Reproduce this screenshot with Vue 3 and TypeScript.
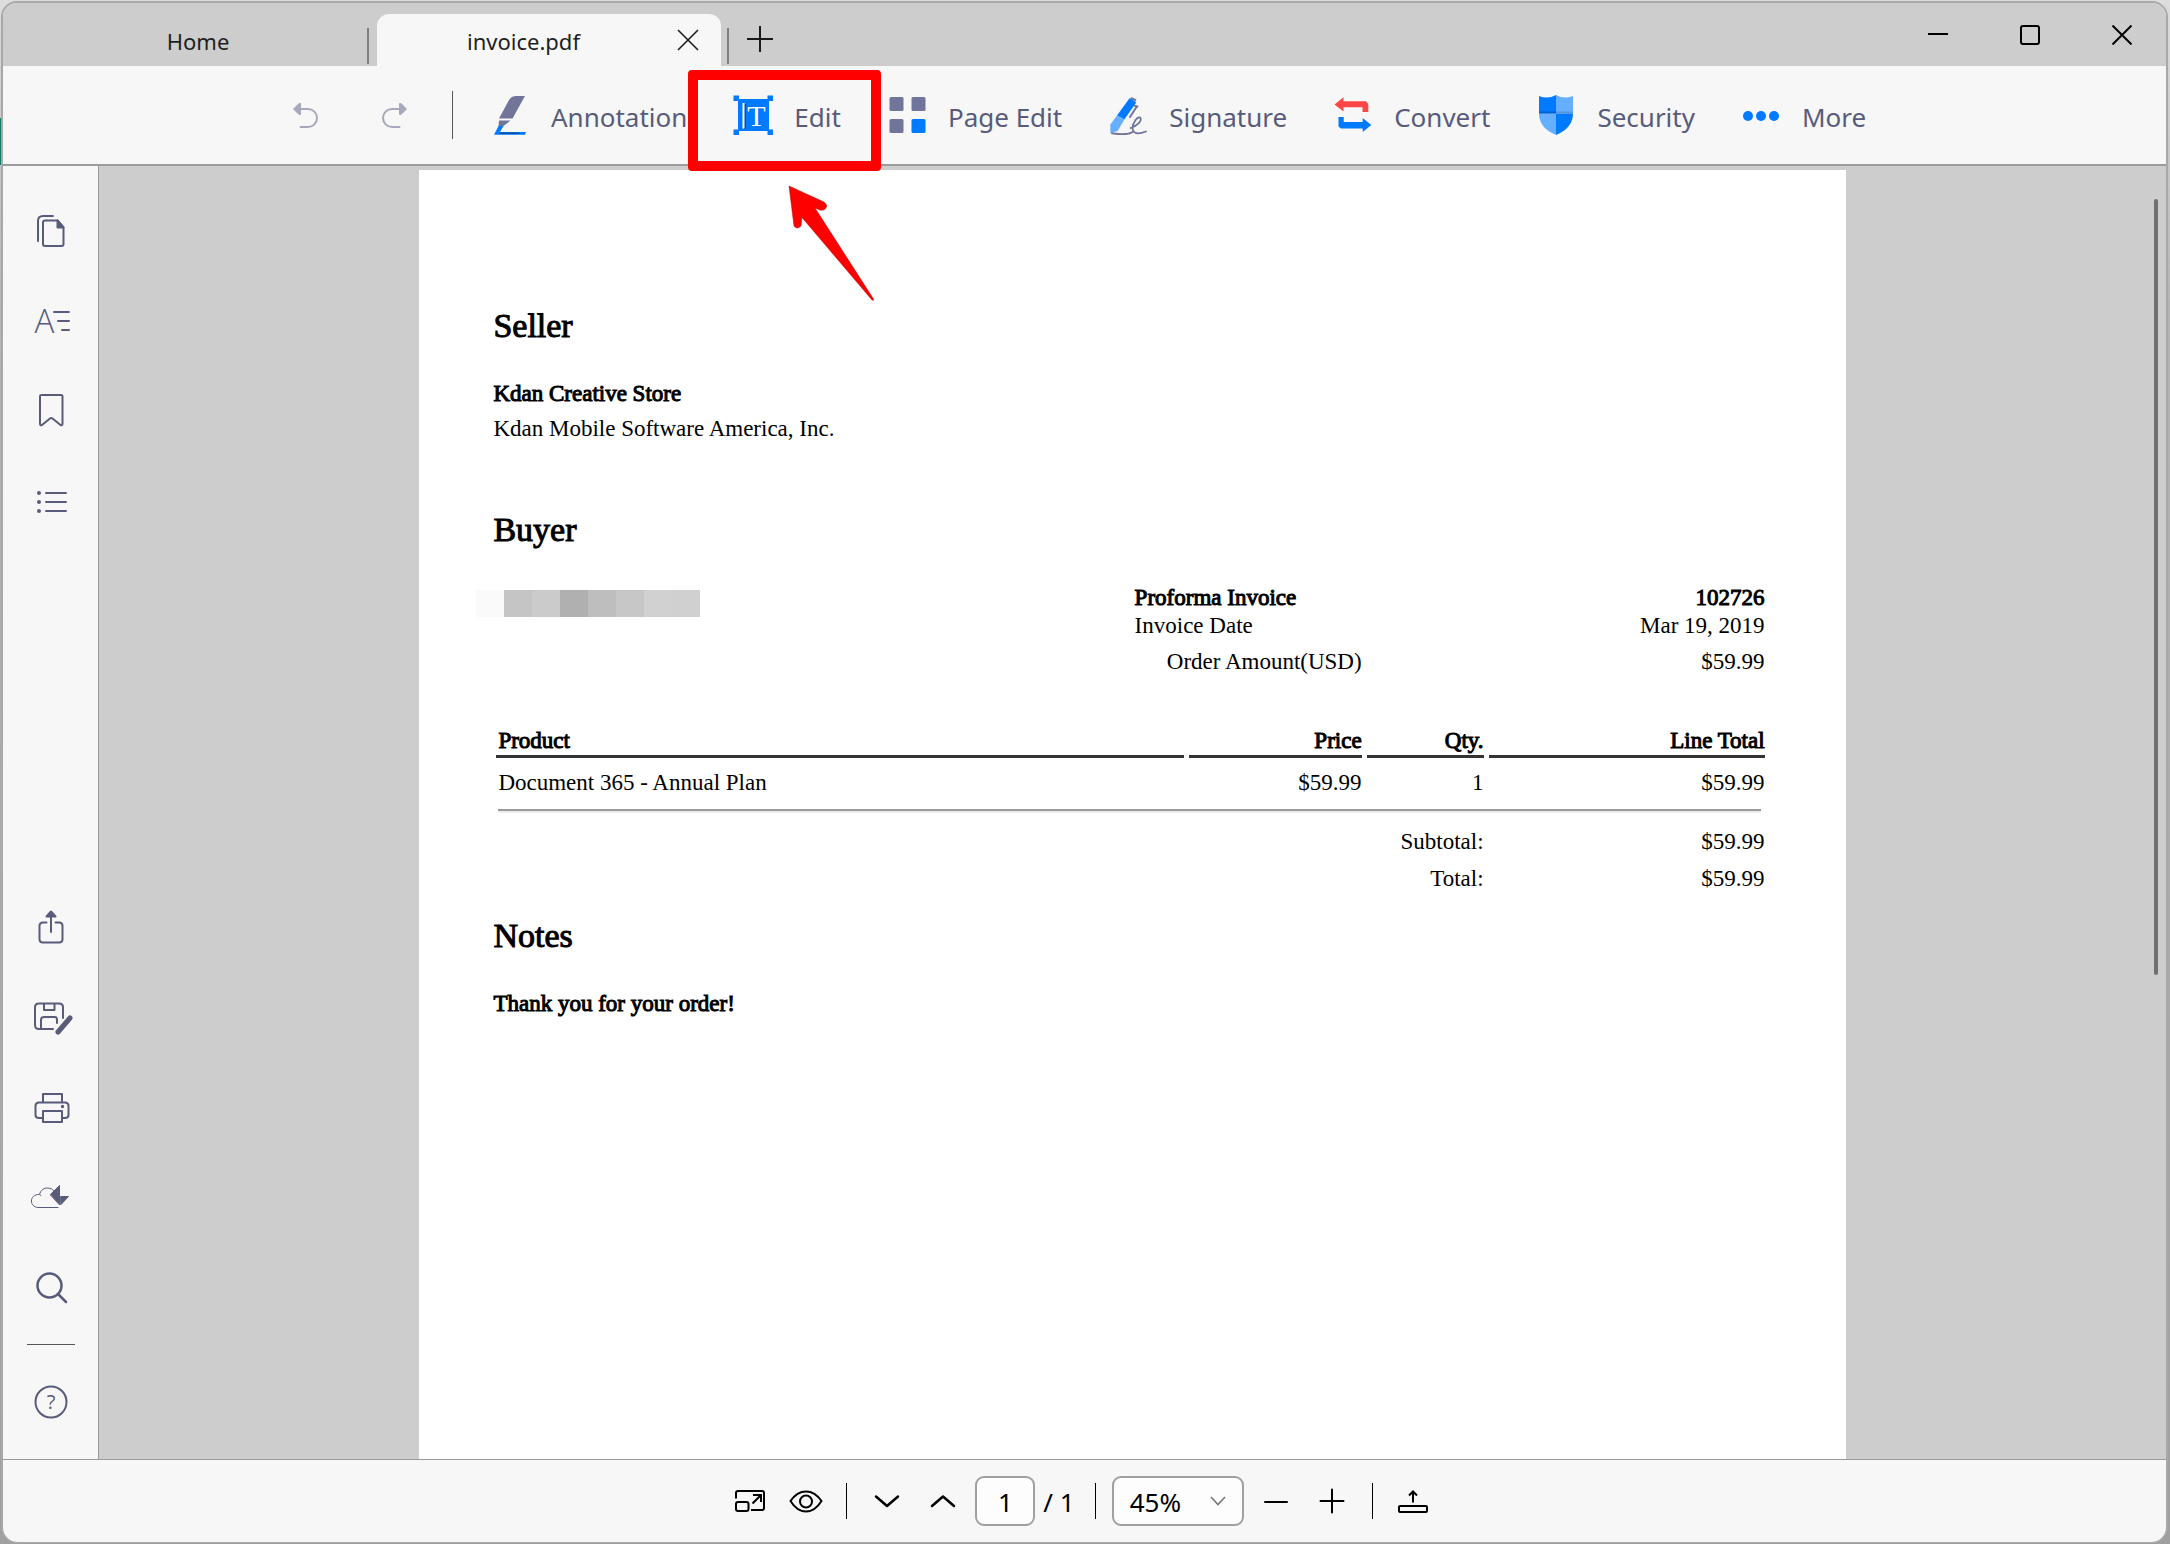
<script setup lang="ts">
import { ref } from 'vue'

interface LineItem {
  product: string
  price: string
  qty: number
  total: string
}

const items: LineItem[] = [
  { product: 'Document 365 - Annual Plan', price: '$59.99', qty: 1, total: '$59.99' },
]

const redaction: string[] = ['#fafafa', '#c5c5c5', '#cbcbcb', '#b0b0b0', '#bebebe', '#c7c7c7', '#d1d1d1', '#d0d0d0']

const currentPage = ref<string>('1')
const zoom = ref<string>('45%')
</script>

<template>
  <div class="desktop">
    <div class="window">
      <header class="titlebar">
        <div class="tab home"><a href="#home">Home</a></div>
        <span class="tab-sep"></span>
        <div class="tab active">
          <a href="#invoice">invoice.pdf</a>
          <button class="tab-close" aria-label="Close tab">
            <svg viewBox="0 0 22 22" width="22" height="22"><path d="M1 1 L21 21 M21 1 L1 21" stroke="#1b1b1b" stroke-width="1.6" /></svg>
          </button>
        </div>
        <span class="tab-sep"></span>
        <button class="tab-new" aria-label="New tab">
          <svg viewBox="0 0 26 26" width="26" height="26"><path d="M13 0 V26 M0 13 H26" stroke="#1b1b1b" stroke-width="2" /></svg>
        </button>
        <div class="window-controls">
          <button aria-label="Minimize">
            <svg viewBox="0 0 20 20" width="20" height="20"><path d="M0 9 H20" stroke="#000" stroke-width="2" /></svg>
          </button>
          <button aria-label="Maximize">
            <svg viewBox="0 0 20 20" width="20" height="20"><rect x="1" y="1" width="18" height="18" rx="2" fill="none" stroke="#000" stroke-width="2" /></svg>
          </button>
          <button aria-label="Close">
            <svg viewBox="0 0 20 20" width="20" height="20"><path d="M0.5 0.5 L19.5 19.5 M19.5 0.5 L0.5 19.5" stroke="#000" stroke-width="2" /></svg>
          </button>
        </div>
      </header>

      <nav class="toolbar">
        <div class="history">
          <button aria-label="Undo">
            <svg class="icon" viewBox="0 0 40 40"><path d="M14 14 H23 A9 9 0 0 1 23 32 H15.500" fill="none" stroke="#a7a9ba" stroke-width="2" stroke-linecap="round" /><path d="M8.500 14 L14 8.500 H15.500 V19.500 H14 Z" fill="#a7a9ba" stroke="#a7a9ba" stroke-linejoin="round" /></svg>
          </button>
          <button aria-label="Redo">
            <svg class="icon" viewBox="0 0 40 40"><path d="M26 14 H17 A9 9 0 0 0 17 32 H24.500" fill="none" stroke="#a7a9ba" stroke-width="2" stroke-linecap="round" /><path d="M31.500 14 L26 8.500 H24.500 V19.500 H26 Z" fill="#a7a9ba" stroke="#a7a9ba" stroke-linejoin="round" /></svg>
          </button>
        </div>
        <span class="toolbar-sep"></span>
        <div class="tools">
          <button class="tool">
            <svg class="icon" viewBox="0 0 40 40">
              <path d="M9 23.500 L19 5 Q21.500 1 26 1 H35 L22.500 23.500 Z M9 25.500 H20.500 L13.500 31 H8.500 Z" fill="#71759a" />
              <path d="M8.500 31 H13.500 L10 37 H36 L35 39.800 H4 Z" fill="#007aff" />
              <path d="M10 37.500 H30 L29 39 H9 Z" fill="#0052ab" />
            </svg>
            <span>Annotation</span>
          </button>
          <div class="callout">
            <button class="tool">
              <svg class="icon" viewBox="0 0 40 40">
                <path d="M5 4 H36 V36 H5 Z M0.500 0.500 H6 V6 H0.500 Z M34.500 0.500 H40 V6 H34.500 Z M0.500 34.500 H6 V40 H0.500 Z M34.500 34.500 H40 V40 H34.500 Z" fill="#007aff" />
                <path d="M12 9 V34" stroke="#0a3f80" stroke-width="1.500" />
                <path d="M10.500 8 V33.500" stroke="#fff" stroke-width="2" />
                <text x="23.500" y="30.500" text-anchor="middle" class="glyph-serif">T</text>
              </svg>
              <span>Edit</span>
            </button>
            <span class="highlight"></span>
            <svg class="arrow" viewBox="0 0 96 126">
              <path d="M6 6 L41 22 Q45 25 43 28 Q41 31 37 30 L32 28 L90.500 119 Q91 121 89 120 L19 37.500 L18 46 Q14 50 11 46 Z" fill="#fe0000" stroke="#c00000" stroke-width="0.500" />
            </svg>
          </div>
          <button class="tool">
            <svg class="icon" viewBox="0 0 40 40">
              <rect x="2.500" y="2" width="14" height="14" rx="1.500" fill="#71759a" />
              <rect x="24.500" y="2" width="14" height="14" rx="1.500" fill="#71759a" />
              <rect x="2.500" y="24" width="14" height="14" rx="1.500" fill="#71759a" />
              <rect x="24.500" y="24" width="14" height="14" rx="1.500" fill="#007aff" />
            </svg>
            <span>Page Edit</span>
          </button>
          <button class="tool">
            <svg class="icon" viewBox="0 0 40 40">
              <path d="M23.500 2 L28.500 4.500 L27.500 6.500 L22.500 4 Z" fill="#71759a" />
              <path d="M21.700 3 L28.300 7.500 L16.300 24.500 L9 20.500 Z" fill="#007aff" />
              <path d="M9 20.500 L16.300 24.500 L9.700 36 L2.300 38 V29.500 Z" fill="#66afff" />
              <path d="M28.500 12 L22 22 M29.500 11.500 L27 11" fill="none" stroke="#71759a" stroke-width="2" stroke-linecap="round" />
              <path d="M4 38.300 Q20 40.500 24.500 37" fill="none" stroke="#71759a" stroke-width="2" stroke-linecap="round" />
              <path d="M22.500 33 C29 31 34 26 32.500 23 C30 20 24.500 28 24.500 33 C25 39 30 39.500 38 36.500" fill="none" stroke="#71759a" stroke-width="1.800" stroke-linecap="round" />
            </svg>
            <span>Signature</span>
          </button>
          <button class="tool">
            <svg class="icon" viewBox="0 0 40 40">
              <path d="M1.500 9.500 L10.500 2.300 V6.300 H33 L35.300 9 V17 H29.500 V12.300 H10.500 V16.500 Z" fill="#ff4545" />
              <path d="M5.500 22 H10.700 V27 H29.700 V23 L38.300 30 L29.700 37 V33.500 H8 L5.500 31.500 Z" fill="#007aff" />
            </svg>
            <span>Convert</span>
          </button>
          <button class="tool">
            <svg class="icon" viewBox="0 0 40 40">
              <path d="M3 1 Q12 4.500 20 0 V18.500 H3 Z" fill="#007aff" />
              <path d="M37 1 Q28 4.500 20 0 V18.500 H37 Z" fill="#66afff" />
              <path d="M3 18.500 H20 V40 Q3 33 3 18.500 Z" fill="#66afff" />
              <path d="M37 18.500 H20 V40 Q37 33 37 18.500 Z" fill="#007aff" />
              <path d="M3 17.500 H20" stroke="#0064d0" stroke-width="2" />
              <path d="M20 17.500 H37" stroke="#5596dc" stroke-width="2" />
            </svg>
            <span>Security</span>
          </button>
          <button class="tool">
            <svg class="icon" viewBox="0 0 40 40"><g fill="#007aff"><circle cx="7" cy="21" r="5" /><circle cx="20" cy="21" r="5" /><circle cx="33" cy="21" r="5" /></g></svg>
            <span>More</span>
          </button>
        </div>
      </nav>

      <div class="body">
        <aside class="sidebar">
          <button aria-label="Pages">
            <svg class="icon line" viewBox="0 0 40 40"><path d="M7 30 V10 Q7 5 12 5 H22" /><path d="M14 9.500 H26.500 L32.500 16.500 V33 Q32.500 35 30.500 35 H14 Q12 35 12 33 V11.500 Q12 9.500 14 9.500 Z" /><path d="M26.500 9.500 V16.500 H32.500 Z" class="solid" /></svg>
          </button>
          <button aria-label="Text">
            <svg class="icon line" viewBox="0 0 40 40"><path d="M23 11 H38 M27 20 H38 M31 29 H38" /><text x="13.500" y="32" text-anchor="middle" class="glyph-letter">A</text></svg>
          </button>
          <button aria-label="Bookmarks">
            <svg class="icon line" viewBox="0 0 40 40"><path d="M9 5 Q9 4 10.500 4 H30 Q31.500 4 31.500 5 V33 Q31 35 29.500 34 L21.500 27.500 Q20.250 26.500 19 27.500 L11 34 Q9.500 35 9 33 Z" /></svg>
          </button>
          <button aria-label="Outline">
            <svg class="icon line" viewBox="0 0 40 40"><path d="M15 12 H35 M15 21 H35 M15 30 H35" /><g class="solid"><circle cx="8" cy="12" r="1" /><circle cx="8" cy="21" r="1" /><circle cx="8" cy="30" r="1" /></g></svg>
          </button>
          <span class="spacer"></span>
          <button aria-label="Share">
            <svg class="icon line" viewBox="0 0 40 40"><path d="M15.500 14.500 H12 Q8.500 14.500 8.500 18 V31 Q8.500 34.500 12 34.500 H28 Q31.500 34.500 31.500 31 V18 Q31.500 14.500 28 14.500 H24.500 M20 24 V5" /><path d="M15.500 8.500 L20 3.500 L24.500 8.500 Z" class="solid" /></svg>
          </button>
          <button aria-label="Save">
            <svg class="icon line" viewBox="0 0 40 40"><path d="M22 31 H8 Q4 31 4 27 V9 Q4 5.500 8 5.500 H28 Q32 5.500 32 9 V20 M13 6 V12 H23.500 V6 M10 31 V22 Q10 19 13 19 H24 Q26 19 26 22 V25" /><path d="M27 34 L39 20" stroke-width="5" /></svg>
          </button>
          <button aria-label="Print">
            <svg class="icon line" viewBox="0 0 40 40"><path d="M12 14 V6 H31 V14 M11 30 H8 Q4.500 30 4.500 27 V18 Q4.500 14.500 8 14.500 H34 Q37.500 14.500 37.500 18 V27 Q37.500 30 34 30 H31.500 M12 23 H31 V34 H12 Z" /><circle cx="31.500" cy="18.500" r="0.700" class="solid" /></svg>
          </button>
          <button aria-label="Cloud">
            <svg class="icon line thin" viewBox="0 0 40 40"><path d="M27 29.500 H7 C-2 29 -2 16 8.500 16.500 L10 17.500 M8.500 16 Q11 9.500 17 10 Q21 10 23 13" /><path d="M19.500 16.500 L28.500 7.500 V26.500 Z M30 18.500 H37.500 L30 26.500 Z" class="solid" /></svg>
          </button>
          <button aria-label="Search">
            <svg class="icon line bold" viewBox="0 0 40 40"><circle cx="18.500" cy="17.500" r="12" /><path d="M27 26 L35 34" /></svg>
          </button>
          <hr class="side-rule" />
          <button class="help" aria-label="Help">
            <svg class="icon line" viewBox="0 0 40 40"><circle cx="20" cy="20" r="15.500" /><text x="20" y="27" text-anchor="middle" class="glyph-help">?</text></svg>
          </button>
        </aside>

        <main class="viewer">
          <article class="page">
            <h2>Seller</h2>
            <p class="party first"><strong>Kdan Creative Store</strong></p>
            <p class="party">Kdan Mobile Software America, Inc.</p>

            <h2 class="buyer">Buyer</h2>
            <div class="buyer-row">
              <div class="redacted">
                <span v-for="(c, i) in redaction" :key="i" :style="{ background: c }"></span>
              </div>
              <dl class="meta">
                <dt><strong>Proforma Invoice</strong></dt>
                <dd><strong>102726</strong></dd>
                <dt>Invoice Date</dt>
                <dd>Mar 19, 2019</dd>
                <dt class="amount">Order Amount(USD)</dt>
                <dd class="amount">$59.99</dd>
              </dl>
            </div>

            <table class="items">
              <colgroup>
                <col />
                <col class="c-price" />
                <col class="c-qty" />
                <col class="c-total" />
              </colgroup>
              <thead>
                <tr>
                  <th scope="col">Product</th>
                  <th scope="col">Price</th>
                  <th scope="col">Qty.</th>
                  <th scope="col">Line Total</th>
                </tr>
              </thead>
              <tbody>
                <tr v-for="item in items" :key="item.product">
                  <td>{{ item.product }}</td>
                  <td>{{ item.price }}</td>
                  <td>{{ item.qty }}</td>
                  <td>{{ item.total }}</td>
                </tr>
              </tbody>
              <tfoot>
                <tr>
                  <td colspan="4" class="rule"><hr /></td>
                </tr>
                <tr>
                  <td colspan="3">Subtotal:</td>
                  <td>$59.99</td>
                </tr>
                <tr>
                  <td colspan="3">Total:</td>
                  <td>$59.99</td>
                </tr>
              </tfoot>
            </table>

            <h2 class="notes">Notes</h2>
            <p class="party first"><strong>Thank you for your order!</strong></p>
          </article>
          <span class="scrollbar"></span>
        </main>
      </div>

      <footer class="statusbar">
        <button aria-label="Fit page">
          <svg class="icon" viewBox="0 0 40 40"><g fill="none" stroke="#000" stroke-width="2"><path d="M6 17.500 V12 Q6 10 8 10 H32 Q34 10 34 12 V27 Q34 29 32 29 H21" /><rect x="6" y="21" width="12.500" height="9" rx="2" /><path d="M22.500 22.500 L30.500 14.500 M23 14 H31 V21" /></g></svg>
        </button>
        <button aria-label="View mode">
          <svg class="icon" viewBox="0 0 40 40"><g fill="none" stroke="#000" stroke-width="2"><path d="M4.500 20 Q11 10.500 20 10.500 Q29 10.500 35.500 20 Q29 30.500 20 30.500 Q11 30.500 4.500 20 Z" /><circle cx="20" cy="20.500" r="6" /></g></svg>
        </button>
        <span class="status-sep"></span>
        <button aria-label="Next page">
          <svg class="icon" viewBox="0 0 40 40"><path d="M9 15.500 L20 25 L31 15.500" fill="none" stroke="#000" stroke-width="2.500" stroke-linecap="round" stroke-linejoin="round" /></svg>
        </button>
        <button aria-label="Previous page">
          <svg class="icon" viewBox="0 0 40 40"><path d="M9 25 L20 15.500 L31 25" fill="none" stroke="#000" stroke-width="2.500" stroke-linecap="round" stroke-linejoin="round" /></svg>
        </button>
        <input v-model="currentPage" class="page-input" type="text" aria-label="Page number" />
        <span class="page-count">/ 1</span>
        <span class="status-sep"></span>
        <div class="zoom">
          <select v-model="zoom" aria-label="Zoom level">
            <option>45%</option>
            <option>100%</option>
          </select>
          <svg viewBox="0 0 16 10" width="16" height="10"><path d="M1 1 L8 8.500 L15 1" fill="none" stroke="#777" stroke-width="1.600" /></svg>
        </div>
        <button aria-label="Zoom out">
          <svg class="icon" viewBox="0 0 40 40"><path d="M9 21 H31" stroke="#000" stroke-width="2" stroke-linecap="round" /></svg>
        </button>
        <button aria-label="Zoom in">
          <svg class="icon" viewBox="0 0 40 40"><path d="M8.500 20 H31.500 M20 8.500 V31.500" stroke="#000" stroke-width="2" stroke-linecap="round" /></svg>
        </button>
        <span class="status-sep"></span>
        <button aria-label="Export">
          <svg class="icon" viewBox="0 0 40 40"><g fill="none" stroke="#000" stroke-width="2"><rect x="6" y="25" width="28" height="6" rx="1" /><path d="M20 21.500 V11.500 M16 14.500 L20 10.500 L24 14.500" /></g></svg>
        </button>
      </footer>
    </div>
  </div>
</template>

<style>
body {
  margin: 0;
}
</style>

<style scoped>
.desktop {
  box-sizing: border-box;
  height: 100vh;
  padding: 1px 2px 1px 1px;
  background:
    linear-gradient(#187a6a, #187a6a) 0 118px / 3px 47px no-repeat,
    linear-gradient(#dcdddc, #b4b4b4 20%, #a0a0a0);
  font-family: 'Noto Sans', sans-serif;
}
.window {
  box-sizing: border-box;
  height: 100%;
  display: flex;
  flex-direction: column;
  overflow: hidden;
  border: 2px solid #a8a8a8;
  border-bottom-width: 1px;
  border-radius: 16px;
  background: #f7f7f7;
}
button {
  display: flex;
  align-items: center;
  justify-content: center;
  padding: 0;
  border: 0;
  background: none;
  color: inherit;
  font: inherit;
}
.icon {
  display: block;
  width: 40px;
  height: 40px;
  flex: none;
}

/* Title bar */
.titlebar {
  flex: none;
  display: flex;
  align-items: flex-end;
  height: 63px;
  background: #cdcdcd;
  color: #1f1f1f;
  font-size: 22px;
  line-height: 30px;
}
.tab {
  box-sizing: border-box;
  display: flex;
  align-items: center;
  height: 52px;
}
.tab a {
  flex: 1;
  padding-top: 2px;
  color: inherit;
  text-align: center;
  text-decoration: none;
}
.tab.home {
  width: 364px;
  padding-left: 26px;
}
.tab.active {
  width: 344px;
  margin-left: 8px;
  margin-right: 6px;
  padding-right: 15px;
  border-radius: 12px 12px 0 0;
  background: #f7f7f7;
}
.tab-close {
  width: 36px;
  height: 36px;
}
.tab-sep {
  width: 2px;
  height: 36px;
  margin-bottom: 2px;
  background: #808080;
}
.tab-new {
  width: 62px;
  height: 54px;
}
.window-controls {
  display: flex;
  align-self: center;
  gap: 4px;
  margin-left: auto;
}
.window-controls button {
  width: 88px;
  height: 40px;
}

/* Toolbar */
.toolbar {
  flex: none;
  position: relative;
  z-index: 1;
  display: flex;
  align-items: center;
  height: 98px;
  padding-left: 282px;
  border-bottom: 2px solid #9b9d9d;
  color: #585c7a;
  font-size: 26px;
  line-height: 36px;
}
.history {
  display: flex;
  gap: 50px;
}
.toolbar-sep {
  width: 1px;
  height: 48px;
  margin: 0 37px;
  background: #555;
}
.tools {
  display: flex;
  gap: 46px;
}
.tool {
  gap: 21px;
  height: 98px;
}
.tool span {
  padding-top: 3px;
  white-space: nowrap;
}
.callout {
  position: relative;
}
.highlight {
  position: absolute;
  top: 4px;
  bottom: -7px;
  left: -45px;
  right: -40px;
  border: 10px solid #fe0000;
  border-radius: 4px;
}
.arrow {
  position: absolute;
  top: 114px;
  left: 50px;
  width: 96px;
  height: 126px;
}
.glyph-serif {
  fill: #fff;
  font-family: 'Liberation Serif', serif;
  font-size: 30px;
}

/* Body */
.body {
  flex: 1;
  min-height: 0;
  display: flex;
}
.sidebar {
  flex: none;
  box-sizing: border-box;
  width: 96px;
  display: flex;
  flex-direction: column;
  align-items: center;
  padding: 20px 0 12px;
  border-right: 1px solid #999;
}
.sidebar button {
  flex: none;
  width: 90px;
  height: 90px;
}
.spacer {
  flex: 1;
}
.side-rule {
  width: 48px;
  height: 1px;
  margin: 11px 0 12px;
  border: 0;
  background: #555;
}
.line {
  overflow: visible;
  fill: none;
  stroke: #585c7a;
  stroke-width: 2;
  stroke-linecap: round;
  stroke-linejoin: round;
}
.line.thin {
  stroke-width: 1;
}
.line.bold {
  stroke-width: 2.5;
}
.line .solid {
  fill: #585c7a;
}
.glyph-letter,
.glyph-help {
  fill: #585c7a;
  stroke: none;
  font-family: 'Open Sans', 'Noto Sans', sans-serif;
}
.glyph-letter {
  font-size: 33px;
  font-weight: 300;
}
.glyph-help {
  font-size: 20px;
}
.viewer {
  flex: 1;
  position: relative;
  overflow: hidden;
  padding-top: 4px;
  background: #cdcdcd;
}
.scrollbar {
  position: absolute;
  top: 33px;
  right: 8px;
  width: 4px;
  height: 60%;
  border-radius: 2px;
  background: #707070;
}

/* Invoice page */
.page {
  box-sizing: border-box;
  width: 69%;
  min-height: 100%;
  margin: 0 auto;
  padding: 136px 81px 0 74px;
  background: #fff;
  color: #000;
  font-family: 'Liberation Serif', serif;
  font-size: 23px;
  line-height: 26px;
}
h2,
p,
dl,
dd {
  margin: 0;
}
h2 {
  font-size: 34px;
  font-weight: 400;
  line-height: 40px;
}
h2,
strong,
th {
  font-weight: 400;
  -webkit-text-stroke: 1px #000;
}
.party {
  line-height: 35px;
}
.party.first {
  margin-top: 30px;
}
.buyer {
  margin-top: 64px;
}
.buyer-row {
  display: flex;
  justify-content: space-between;
  margin-top: 25px;
}
.redacted {
  display: flex;
  margin: 15px 0 0 -17px;
}
.redacted span {
  width: 28px;
  height: 27px;
}
.meta {
  display: grid;
  grid-template-columns: 227px 1fr;
  width: 630px;
  padding-top: 9px;
  line-height: 28px;
}
.meta dd {
  text-align: right;
}
.meta .amount {
  margin-top: 8px;
  text-align: right;
}
.items {
  width: calc(100% + 7px);
  margin: 52px -5px 0 -2px;
  border-collapse: separate;
  border-spacing: 5px 0;
  table-layout: fixed;
}
.c-price {
  width: 173px;
}
.c-qty {
  width: 117px;
}
.c-total {
  width: 276px;
}
.items th,
.items td {
  padding: 0;
  text-align: right;
}
.items th {
  padding-bottom: 1px;
  border-bottom: 3px solid #333;
}
.items th:first-child,
.items tbody td:first-child {
  padding-left: 2px;
  text-align: left;
}
.items tbody td {
  padding-top: 12px;
  padding-bottom: 13px;
}
.items tfoot td {
  padding-top: 11px;
}
.items tfoot td.rule {
  padding: 0 4px 5px 2px;
}
.rule hr {
  margin: 0;
  border: 0;
  border-top: 2px solid #999;
  border-bottom: 2px solid #ececec;
}
.notes {
  margin-top: 24px;
}

/* Status bar */
.statusbar {
  flex: none;
  box-sizing: border-box;
  display: flex;
  align-items: center;
  justify-content: center;
  height: 83px;
  padding-right: 6px;
  border-top: 1px solid #999;
  color: #000;
  font-size: 26px;
  line-height: 36px;
}
.statusbar button {
  width: 56px;
  height: 56px;
}
.status-sep {
  width: 1px;
  height: 36px;
  margin: 0 12px;
  background: #000;
}
.page-input,
.zoom select {
  box-sizing: border-box;
  height: 50px;
  border: 2px solid #a0a0a0;
  border-radius: 9px;
  background: #fdfdfd;
  color: #000;
  font: inherit;
}
.page-input {
  width: 60px;
  margin-left: 4px;
  padding: 2px 0 0;
  text-align: center;
}
.page-count {
  padding: 2px 8px 0;
  white-space: nowrap;
}
.zoom {
  position: relative;
  margin: 0 4px;
}
.zoom select {
  display: block;
  width: 132px;
  padding: 2px 0 0 16px;
  appearance: none;
}
.zoom svg {
  position: absolute;
  top: 20px;
  right: 18px;
  pointer-events: none;
}
</style>
